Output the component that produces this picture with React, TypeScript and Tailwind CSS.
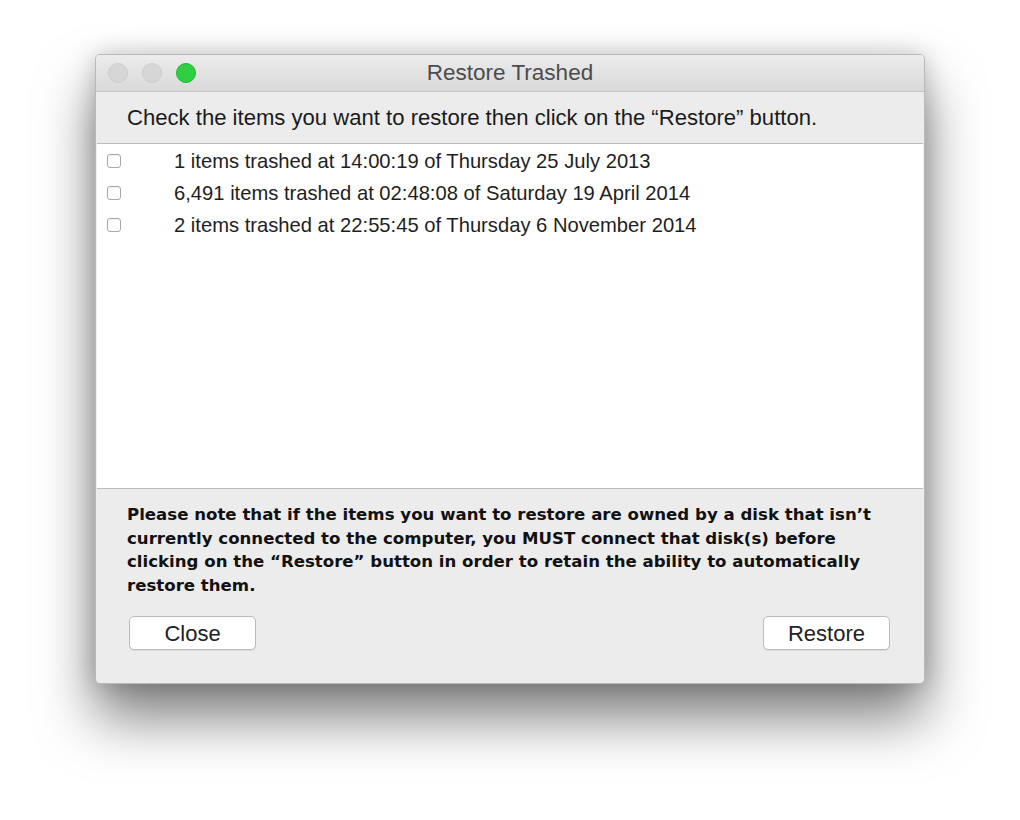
const ITEMS = [
  "1 items trashed at 14:00:19 of Thursday 25 July 2013",
  "6,491 items trashed at 02:48:08 of Saturday 19 April 2014",
  "2 items trashed at 22:55:45 of Thursday 6 November 2014",
];

const FONT = "font-['Helvetica_Neue','Liberation_Sans',Arial,sans-serif]";

export default function App() {
  return (
    <div className={"min-h-[820px] w-[1020px] bg-white pl-[95px] pt-[54px] " + FONT}>
      <div className="flex h-[630px] w-[830px] flex-col overflow-hidden rounded-[5px] border border-[#b9b9b9] bg-[#ececec] shadow-[0_34px_56px_rgba(0,0,0,0.5),0_0_24px_rgba(0,0,0,0.2)]">
        {/* title bar */}
        <div className="relative flex h-[37px] shrink-0 items-center border-b border-[#c4c4c4] bg-gradient-to-b from-[#ececec] to-[#d9d9d9] px-[12px]">
          <div className="flex gap-[14px]">
            <span className="h-[20px] w-[20px] rounded-full border border-[#cdcdcd] bg-[#d6d6d6]" />
            <span className="h-[20px] w-[20px] rounded-full border border-[#cdcdcd] bg-[#d6d6d6]" />
            <span className="h-[20px] w-[20px] rounded-full border border-[#1fb537] bg-[#2ecf42]" />
          </div>
          <div className="absolute inset-x-0 text-center text-[22.5px] text-[#4c4c4c]">Restore Trashed</div>
        </div>

        {/* instruction */}
        <div className="flex h-[51px] shrink-0 items-center pl-[31px] text-[22.1px] text-[#1b1b1b]">
          Check the items you want to restore then click on the “Restore” button.
        </div>

        {/* list */}
        <div className="mx-[1px] flex h-[346px] shrink-0 flex-col border-y border-[#bdbdbd] bg-white pt-[1px]">
          {ITEMS.map((t) => (
            <label key={t} className="flex h-[32px] items-center text-[20.2px] text-[#1e1e1e]">
              <span className="ml-[10px] h-[14px] w-[14px] rounded-[3px] border border-[#a7a7a7] bg-white shadow-[inset_0_1px_1px_rgba(0,0,0,0.06)]" />
              <span className="ml-[53px]">{t}</span>
            </label>
          ))}
        </div>

        {/* footer */}
        <div className="flex flex-1 flex-col pl-[31px] pr-[20px] pt-[14px]">
          <p className="font-['DejaVu_Sans',Verdana,sans-serif] text-[16.6px] font-bold leading-[23.7px] text-[#111]">
            Please note that if the items you want to restore are owned by a disk that isn’t currently connected to the computer, you MUST connect that disk(s) before clicking on the “Restore” button in order to retain the ability to automatically restore them.
          </p>
          <div className="mt-[18px] flex justify-between pl-[2px] pr-[14px]">
            <button className="h-[34px] w-[127px] rounded-[5px] border border-[#bcbcbc] bg-white text-[22px] text-[#222] shadow-[0_1px_0_rgba(0,0,0,0.08)]">Close</button>
            <button className="h-[34px] w-[127px] rounded-[5px] border border-[#bcbcbc] bg-white text-[22px] text-[#222] shadow-[0_1px_0_rgba(0,0,0,0.08)]">Restore</button>
          </div>
        </div>
      </div>
    </div>
  );
}
